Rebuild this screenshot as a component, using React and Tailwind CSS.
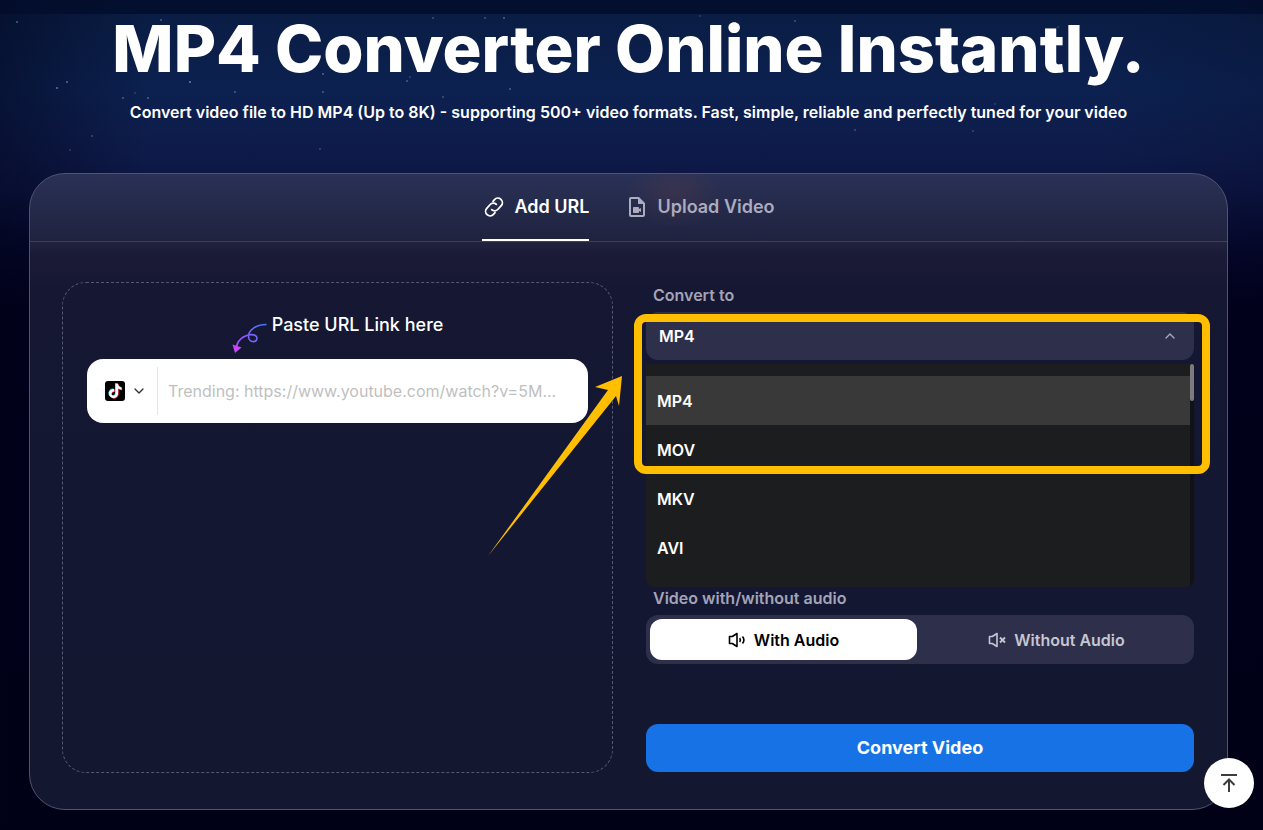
import React from 'react';
import { ChevronDown, ChevronUp } from 'lucide-react';
import { MdOutlineVideoFile } from 'react-icons/md';

const formats = ['MP4', 'MOV', 'MKV', 'AVI'];

// x, y, radius, opacity
const stars = [
  [17, 22, 1, 0.4], [67, 82, 1, 0.45], [57, 88, 1, 0.5], [190, 82, 1, 0.55], [161, 20, 1, 0.35],
  [180, 26, 1, 0.4], [235, 92, 1, 0.35], [123, 98, 1, 0.35], [148, 98, 1, 0.4], [323, 92, 1, 0.35],
  [323, 74, 1, 0.4], [407, 81, 1, 0.35], [410, 77, 1, 0.2], [510, 89, 1, 0.35], [433, 18, 1, 0.3],
  [485, 18, 1, 0.3], [504, 18, 1, 0.4], [92, 136, 1, 0.3], [70, 150, 1, 0.2], [320, 149, 1, 0.25],
  [1080, 110, 1, 0.4], [1077, 118, 1, 0.25], [855, 130, 1, 0.3], [973, 131, 1, 0.25], [1058, 27, 1, 0.2],
  [795, 21, 1, 0.3], [443, 97, 1, 0.3], [135, 93, 1, 0.2], [700, 16, 1, 0.2], [995, 104, 1, 0.2],
];

function LinkIcon() {
  return (
    <svg width="24" height="24" viewBox="0 0 24 24" fill="none" stroke="currentColor" strokeWidth="1.8" strokeLinecap="round" aria-hidden="true">
      <g transform="rotate(-48 12 12)">
        <path d="M8.500 16.500H6.200a4.500 4.500 0 0 1 0-9H11a4.500 4.500 0 0 1 4.500 4.500" />
        <path d="M15.500 7.500H17.800a4.500 4.500 0 0 1 0 9H13a4.500 4.500 0 0 1-4.500-4.500" />
      </g>
    </svg>
  );
}

function SpeakerIcon({ muted }) {
  return (
    <svg width="18" height="18" viewBox="0 0 18 18" fill="none" stroke="currentColor" strokeWidth="1.6" aria-hidden="true">
      <path d="M1.500 5.500H4.300L9 2.500V15.500L4.300 12.500H1.500Z" strokeLinejoin="round" />
      {muted ? (
        <path d="M12 6.500 17 11.500M17 6.500 12 11.500" strokeWidth="1.800" />
      ) : (
        <>
          <path d="M11.700 7c.8 1.200.8 2.800 0 4" />
          <path d="M14.500 5.500c1.600 2 1.600 5 0 7" />
        </>
      )}
    </svg>
  );
}

function TikTokIcon() {
  const note =
    'M448,209.91a210.06,210.06,0,0,1-122.77-39.25V349.38A162.55,162.55,0,1,1,185,188.31V278.2a74.62,74.62,0,1,0,52.23,71.18V0l88,0a121.18,121.18,0,0,0,1.86,22.17h0A122.18,122.18,0,0,0,381,102.39a121.43,121.43,0,0,0,67,20.14Z';
  return (
    <svg width="20" height="20" viewBox="0 0 20 20" aria-hidden="true">
      <rect width="20" height="20" rx="3" fill="#000" />
      <path d={note} fill="#25f4ee" transform="translate(3.400 2.300) scale(.028)" />
      <path d={note} fill="#fe2c55" transform="translate(4.600 3.300) scale(.028)" />
      <path d={note} fill="#fff" transform="translate(4 2.800) scale(.028)" />
    </svg>
  );
}

function Squiggle() {
  return (
    <svg className="mt-4 mr-1" width="36" height="30" viewBox="0 0 36 30" fill="none" aria-hidden="true">
      <defs>
        <linearGradient id="squiggle" x1="0" y1="30" x2="35" y2="0" gradientUnits="userSpaceOnUse">
          <stop offset="0" stopColor="#c945ff" />
          <stop offset="1" stopColor="#3a7bff" />
        </linearGradient>
      </defs>
      <path
        d="M34.500 1.500C24 1.500 16.500 7 16.500 13.500c0 4 3 5.300 5.500 5.100 3.600-.3 4.200-5.600 0-6.700C15.500 10.500 6 15 4.500 24"
        stroke="url(#squiggle)"
        strokeWidth="1.600"
      />
      <path d="M0.500 21.500 9.500 24.500 3 30Z" fill="#c945ff" />
    </svg>
  );
}

function NightSky() {
  return (
    <div className="absolute inset-0 overflow-hidden bg-[linear-gradient(180deg,#0a1c42_0px,#0c2150_90px,#0e1b4a_150px,#0c1542_190px,#04072a_250px,#01001c_310px,#000016_100%)]">
      <div className="absolute inset-0 bg-[linear-gradient(90deg,rgba(0,3,24,0.45)_0px,rgba(0,3,24,0)_150px,rgba(0,3,24,0)_1100px,rgba(0,3,24,0.15)_100%)]" />
      <svg className="absolute inset-x-0 top-0 h-40 w-full" aria-hidden="true">
        {stars.map(([x, y, r, o]) => (
          <circle key={`${x}-${y}`} cx={x} cy={y} r={r} fill="#b9cdf5" opacity={o} />
        ))}
      </svg>
    </div>
  );
}

function FormatSelect() {
  const [format, setFormat] = React.useState('MP4');

  return (
    <div className="relative">
      <select
        id="format"
        value={format}
        onChange={(e) => setFormat(e.target.value)}
        className="block h-12 w-full appearance-none rounded-xl bg-[#2e2f4a] px-[13px] text-base font-semibold text-white outline-none"
      >
        {formats.map((name) => (
          <option key={name}>{name}</option>
        ))}
      </select>
      <ChevronUp size={16} className="pointer-events-none absolute top-4 right-4 text-[#a9aabb]" />

      {/* Open list */}
      <div className="absolute inset-x-0 top-[52px] z-10 flex h-[223px] overflow-hidden rounded-b-lg bg-[#1c1d1e]">
        <ul className="flex-1 py-3">
          {formats.map((name) => (
            <li key={name}>
              <button
                type="button"
                onClick={() => setFormat(name)}
                className={`block h-[49px] w-full px-[11px] text-left text-base font-semibold text-white ${name === format ? 'bg-[#39393a]' : ''}`}
              >
                {name}
              </button>
            </li>
          ))}
        </ul>
        <div className="w-1 bg-[#101214]">
          <div className="h-[37px] rounded-sm bg-[#7c7c7c]" />
        </div>
      </div>

      {/* Callout frame and arrow */}
      <div className="pointer-events-none absolute top-[2px] -right-4 -left-3 z-20 h-40 rounded-xl border-8 border-[#ffbf00]" />
      <svg className="pointer-events-none absolute top-16 -left-[158px] z-20" width="136" height="182" viewBox="0 0 136 182" aria-hidden="true">
        <path d="M134 0 107 11 120 14 0 180 128 20 131 30Z" fill="#ffbf00" />
      </svg>
    </div>
  );
}

export default function App() {
  const [tab, setTab] = React.useState('url');
  const [audio, setAudio] = React.useState('with');

  const tabs = [
    { id: 'url', name: 'Add URL', icon: <LinkIcon /> },
    { id: 'upload', name: 'Upload Video', icon: <MdOutlineVideoFile size={24} /> },
  ];
  const audioOptions = [
    { id: 'with', name: 'With Audio' },
    { id: 'without', name: 'Without Audio' },
  ];

  return (
    <div className="relative isolate min-h-screen bg-[#000016] pb-5 font-['Inter',sans-serif] text-white">
      <div className="absolute inset-0 -z-10">
        <NightSky />
      </div>

      <header className="h-[14px] bg-[#030d2b]/80" />

      <main className="pr-[35px] pl-[29px]">
        <h1 className="text-center text-[65px] leading-[70px] font-extrabold whitespace-nowrap">MP4 Converter Online Instantly.</h1>
        <p className="mt-4 text-center text-base leading-6 font-semibold">
          Convert video file to HD MP4 (Up to 8K) - supporting 500+ video formats. Fast, simple, reliable and perfectly tuned for your video
        </p>

        <section className="mt-[49px] rounded-[36px] border border-[#50546f] bg-[radial-gradient(ellipse_50px_36px_at_645px_18px,rgba(120,70,70,0.22),transparent),linear-gradient(180deg,#293156_0px,#20233f_66px,#1b1b38_80px,#151733_115px,#141730_100%)]">
          {/* Tabs */}
          <div className="flex h-[68px] justify-center gap-9 border-b border-[#3e4058]">
            {tabs.map((item) => (
              <button
                key={item.id}
                type="button"
                onClick={() => setTab(item.id)}
                className={`flex items-center gap-2 border-b-2 text-lg font-semibold ${
                  tab === item.id ? 'border-white text-white' : 'border-transparent text-[#abacbf]'
                }`}
              >
                {item.icon}
                {item.name}
              </button>
            ))}
          </div>

          <div className="grid grid-cols-[551fr_548fr] gap-[33px] pt-10 pr-[33px] pb-9 pl-8">
            {/* Link panel */}
            <div className="min-h-[491px] rounded-3xl border border-dashed border-[#55586f] p-6">
              <div className="flex h-[52px] justify-center">
                <Squiggle />
                <label htmlFor="video-url" className="text-lg leading-9 font-medium">
                  Paste URL Link here
                </label>
              </div>
              <div className="flex h-16 items-center rounded-2xl bg-white pr-5">
                <button type="button" aria-label="Choose platform" className="flex h-12 items-center gap-1.5 border-r border-[#e5e5e5] pr-2.5 pl-[18px] text-[#333]">
                  <TikTokIcon />
                  <ChevronDown size={16} />
                </button>
                <input
                  id="video-url"
                  type="text"
                  placeholder="Trending: https://www.youtube.com/watch?v=5M..."
                  className="min-w-0 flex-1 pl-2.5 text-base text-ellipsis text-gray-900 outline-none placeholder:text-[#bfbfbf]"
                />
              </div>
            </div>

            {/* Options */}
            <form onSubmit={(e) => e.preventDefault()}>
              <label htmlFor="format" className="mb-1 block px-[7px] text-base leading-[26px] font-semibold text-[#a3a4b8]">
                Convert to
              </label>
              <FormatSelect />

              <fieldset className="mt-[225px]">
                <legend className="mb-1 px-[7px] text-base leading-[26px] font-semibold text-[#a3a4b8]">Video with/without audio</legend>
                <div className="grid grid-cols-2 gap-1.5 rounded-xl bg-[#2e2f4a] p-1">
                  {audioOptions.map((item) => (
                    <label
                      key={item.id}
                      className={`relative flex h-[41px] items-center justify-center gap-2 rounded-xl text-base font-semibold ${
                        audio === item.id ? 'bg-white text-black' : 'text-[#c5c6d2]'
                      }`}
                    >
                      <input
                        type="radio"
                        name="audio"
                        className="sr-only"
                        checked={audio === item.id}
                        onChange={() => setAudio(item.id)}
                      />
                      <SpeakerIcon muted={item.id === 'without'} />
                      {item.name}
                    </label>
                  ))}
                </div>
              </fieldset>

              <button type="submit" className="mt-[60px] h-12 w-full rounded-xl bg-[#1772e6] text-lg font-bold">
                Convert Video
              </button>
            </form>
          </div>
        </section>
      </main>

      {/* Back to top */}
      <button
        type="button"
        aria-label="Back to top"
        onClick={() => window.scrollTo({ top: 0 })}
        className="fixed right-[9px] bottom-[22px] z-30 flex size-[50px] items-center justify-center rounded-full bg-white text-[#3c3c3c]"
      >
        <svg width="24" height="24" viewBox="0 0 24 24" fill="none" stroke="currentColor" strokeWidth="2" aria-hidden="true">
          <path d="M4 4H20M12 21V8.500M6.500 14 12 8.500 17.500 14" />
        </svg>
      </button>
    </div>
  );
}
